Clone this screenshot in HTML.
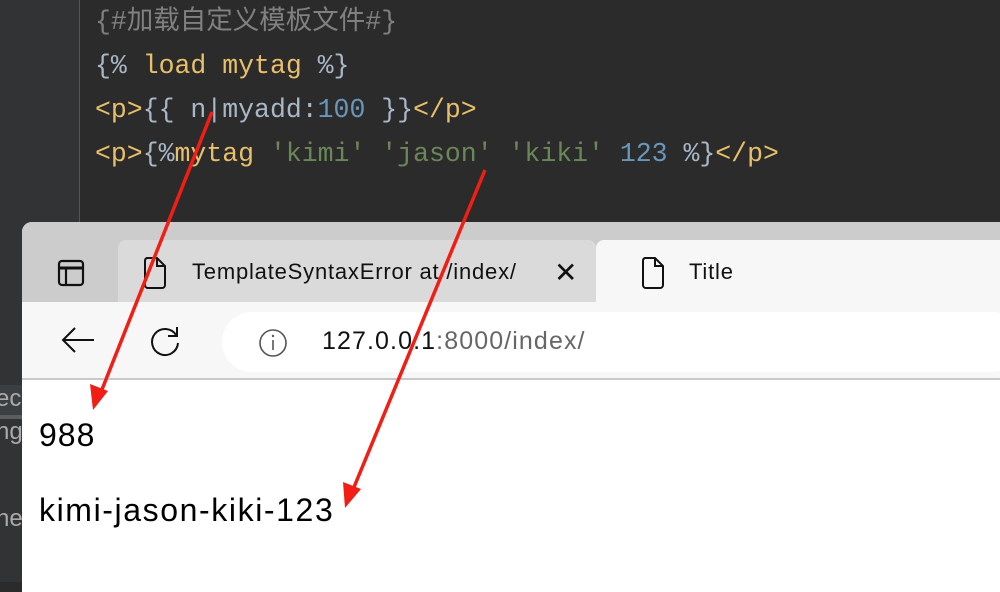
<!DOCTYPE html>
<html><head><meta charset="utf-8"><style>
*{margin:0;padding:0;box-sizing:border-box}
body{width:1000px;height:582px;overflow:hidden;background:#2b2b2b;position:relative;font-family:"Liberation Sans","Noto Sans CJK SC",sans-serif}
.gut{position:absolute;left:0;top:0;width:80px;height:582px;background:#313335;border-right:1px solid #555}
.code{position:absolute;left:95px;font-family:"Liberation Mono","Noto Sans CJK SC",monospace;font-size:26.5px;color:#a9b7c6;white-space:pre;line-height:30px}
.c{color:#808080}.y{color:#e8bf6a}.n{color:#6897bb}.s{color:#6a8759}
.side{position:absolute;left:0;font-size:24px;color:#aaa}
.win{position:absolute;left:22px;top:222px;width:990px;height:370px;background:#fff;border-top-left-radius:10px;overflow:hidden}
.strip{position:absolute;left:0;top:0;width:100%;height:80px;background:#cccccc}
.tab1{position:absolute;left:96px;top:18px;width:478px;height:62px;background:#dadada;border-radius:8px 8px 0 0}
.tab2{position:absolute;left:574px;top:18px;width:430px;height:64px;background:#f7f7f7;border-radius:8px 8px 0 0}
.tb{position:absolute;left:0;top:80px;width:100%;height:78px;background:#f7f7f7;border-bottom:2px solid #c8c8c8}
.addr{position:absolute;left:200px;top:10px;width:800px;height:60px;background:#fff;border-radius:30px}
.t{position:absolute;font-size:22px;color:#111}
</style></head><body>
<div class="gut"></div>
<div class="code c" style="top:7px">{#加载自定义模板文件#}</div>
<div class="code" style="top:51px">{% <span class="y">load mytag</span> %}</div>
<div class="code" style="top:95px"><span class="y">&lt;p&gt;</span>{{ n|myadd:<span class="n">100</span> }}<span class="y">&lt;/p&gt;</span></div>
<div class="code" style="top:139px"><span class="y">&lt;p&gt;</span>{%<span class="y">mytag</span> <span class="s">'kimi'</span> <span class="s">'jason'</span> <span class="s">'kiki'</span> <span class="n">123</span> %}<span class="y">&lt;/p&gt;</span></div>
<div style="position:absolute;left:0;top:385px;width:22px;height:30px;background:#3c3f41"></div>
<div style="position:absolute;left:0;top:415px;width:22px;height:4px;background:#5a5d5f"></div>
<div class="side" style="top:385px;left:-4px">ec</div>
<div class="side" style="top:418px;left:-4px">ng</div>
<div class="side" style="top:505px;left:-4px">he</div>
<div class="win">
<div class="strip"></div>
<div class="tab1"></div>
<div class="tab2"></div>
<svg style="position:absolute;left:35px;top:37px" width="28" height="28" viewBox="0 0 28 28"><rect x="2" y="2" width="24" height="24" rx="3" fill="none" stroke="#111" stroke-width="2.2"/><line x1="2" y1="9" x2="26" y2="9" stroke="#111" stroke-width="3"/><line x1="9" y1="9" x2="9" y2="26" stroke="#111" stroke-width="2.2"/></svg>
<svg style="position:absolute;left:121px;top:34px" width="24" height="34" viewBox="0 0 24 34"><path d="M4 2H14L22 10V29a3 3 0 0 1-3 3H5a3 3 0 0 1-3-3V5a3 3 0 0 1 2-3Z M14 2V10H22" fill="none" stroke="#111" stroke-width="2"/></svg>
<div class="t" style="left:170px;top:37px;letter-spacing:0.8px">TemplateSyntaxError at /index/</div>
<div class="t" style="left:532px;top:34px;font-size:28px">✕</div>
<svg style="position:absolute;left:619px;top:34px" width="24" height="34" viewBox="0 0 24 34"><path d="M4 2H14L22 10V29a3 3 0 0 1-3 3H5a3 3 0 0 1-3-3V5a3 3 0 0 1 2-3Z M14 2V10H22" fill="none" stroke="#111" stroke-width="2"/></svg>
<div class="t" style="left:667px;top:37px;letter-spacing:0.8px">Title</div>
<div class="tb"><div class="addr"></div>
<svg style="position:absolute;left:38px;top:23px" width="36" height="30" viewBox="0 0 36 30"><path d="M34 15H3M15 3L3 15L15 27" fill="none" stroke="#111" stroke-width="2"/></svg>
<svg style="position:absolute;left:126px;top:23px" width="36" height="36" viewBox="0 0 36 36"><path d="M28 10A13 13 0 1 0 30 18M29 2V11H20" fill="none" stroke="#111" stroke-width="2"/></svg>
<svg style="position:absolute;left:236px;top:26px" width="30" height="30" viewBox="0 0 30 30"><circle cx="15" cy="15" r="13" fill="none" stroke="#555" stroke-width="1.6"/><line x1="15" y1="12" x2="15" y2="22" stroke="#555" stroke-width="1.6"/><circle cx="15" cy="8" r="1.2" fill="#555"/></svg>
<div class="t" style="left:300px;top:25px;font-size:25px;letter-spacing:1.1px">127.0.0.1<span style="color:#666">:8000/index/</span></div>
</div>
<div class="t" style="left:17px;top:195px;font-size:32px;color:#000;letter-spacing:1px">988</div>
<div class="t" style="left:17px;top:270px;font-size:32px;color:#000;letter-spacing:1.6px">kimi-jason-kiki-123</div>
</div>
<svg style="position:absolute;left:0;top:0" width="1000" height="582">
<g stroke="#f01e14" stroke-width="3.5" fill="#f01e14">
<line x1="212" y1="112" x2="101" y2="392"/>
<polygon points="93,410 90,384 108,391" stroke="none"/>
<line x1="485" y1="170" x2="352" y2="492"/>
<polygon points="345,508 343,482 361,489" stroke="none"/>
</g></svg>
</body></html>
